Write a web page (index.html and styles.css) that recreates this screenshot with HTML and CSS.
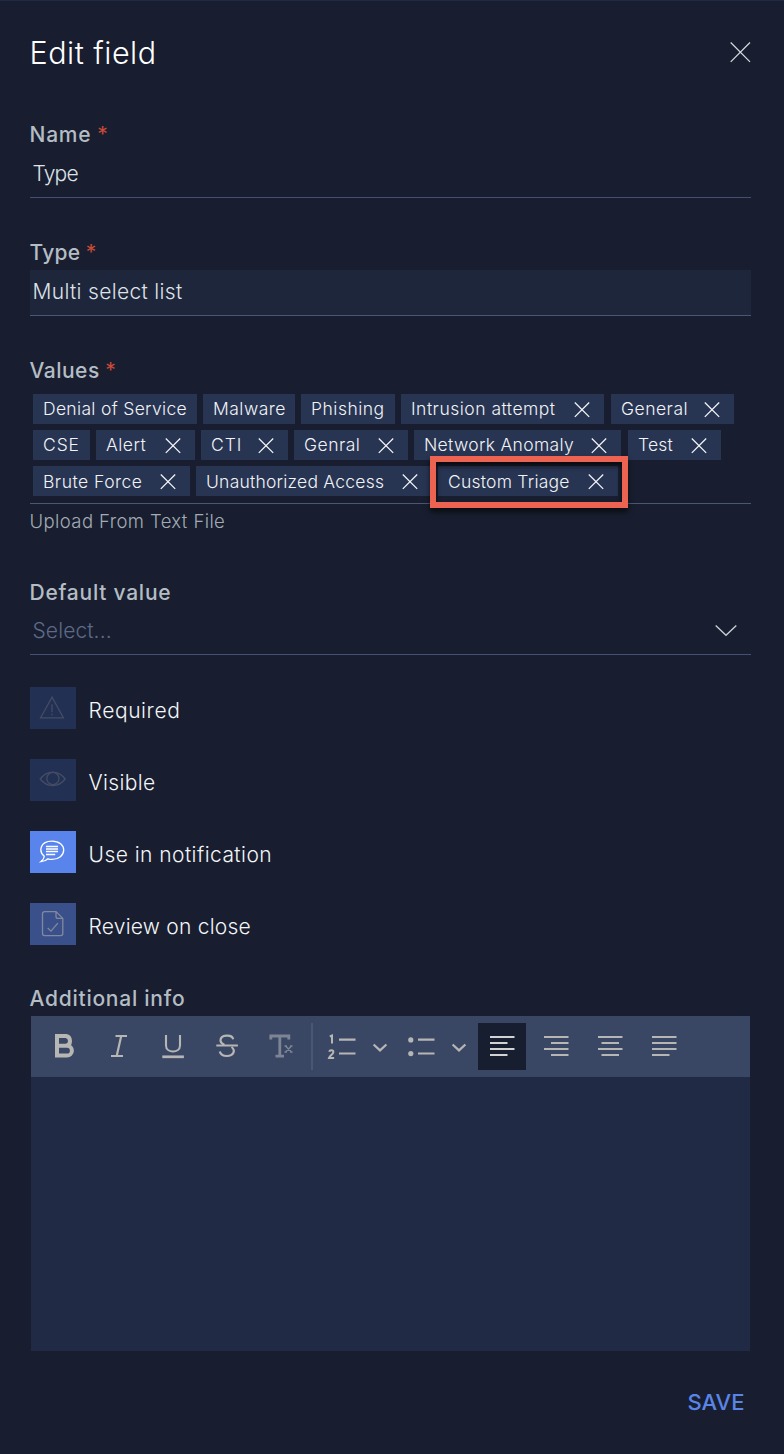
FILE: index.html
```
<!DOCTYPE html>
<html lang="en">
<head>
<meta charset="utf-8">
<title>Edit field</title>
<link rel="stylesheet" href="styles.css">
</head>
<body>
<svg class="defs" width="0" height="0">
  <symbol id="x" viewBox="0 0 16 16"><path d="M.8.5 15.200 14.900M15.200.5.8 14.900" fill="none" stroke="currentColor" stroke-width="1.3"/></symbol>
  <symbol id="chev" viewBox="0 0 16 10"><path d="M1.600 1.500l6.400 5.900L14.400 1.500" fill="none" stroke="currentColor" stroke-width="2.2"/></symbol>
</svg>
<main class="dialog">
  <header class="head">
    <h1 class="title">Edit field</h1>
    <button class="close" aria-label="Close"><svg width="22" height="22" viewBox="0 0 22 22"><path d="M1.700 1.500 21 20.900M21 1.500 1.700 20.900" fill="none" stroke="currentColor" stroke-width="1.25"/></svg></button>
  </header>

  <section class="group">
    <label class="label">Name <span class="req">*</span></label>
    <div class="input input-name">Type</div>
  </section>

  <section class="group">
    <label class="label label-type">Type <span class="req">*</span></label>
    <div class="input input-locked">Multi select list</div>
  </section>

  <section class="group group-values">
    <label class="label label-values">Values <span class="req">*</span></label>
    <div class="tags">
      <div class="row">
        <span class="tag w164 tight">Denial of Service</span>
        <span class="tag w92">Malware</span>
        <span class="tag w94">Phishing</span>
        <span class="tag w203">Intrusion attempt<svg class="x"><use href="#x"/></svg></span>
        <span class="tag w123 push">General<svg class="x"><use href="#x"/></svg></span>
      </div>
      <div class="row">
        <span class="tag w57 loose">CSE</span>
        <span class="tag w99">Alert<svg class="x"><use href="#x"/></svg></span>
        <span class="tag w87 loose">CTI<svg class="x"><use href="#x"/></svg></span>
        <span class="tag w114">Genral<svg class="x"><use href="#x"/></svg></span>
        <span class="tag w207 tight">Network Anomaly<svg class="x"><use href="#x"/></svg></span>
        <span class="tag w93 push tighter">Test<svg class="x"><use href="#x"/></svg></span>
      </div>
      <div class="row row-low">
        <span class="tag w157">Brute Force<svg class="x"><use href="#x"/></svg></span>
        <span class="tag w236 tighter">Unauthorized Access<svg class="x"><use href="#x"/></svg></span>
        <span class="tag w180 tighter marked">Custom Triage<svg class="x"><use href="#x"/></svg></span>
      </div>
    </div>
    <div class="upload">Upload From Text File</div>
  </section>

  <section class="group group-default">
    <label class="label">Default value</label>
    <div class="input input-select">Select...<svg width="22" height="14" viewBox="0 0 22 14"><path d="M.7 1.5 11 11.2 21.3 1.5" fill="none" stroke="currentColor" stroke-width="1.4"/></svg></div>
  </section>

  <section class="options">
    <div class="option">
      <span class="toggle dim"><svg width="28" height="28" viewBox="0 0 28 28"><path d="M13 4.2 1.6 24.8h22.8zM13 11.2v8M13 20.8v1.8"/></svg></span>
      <span class="s-req">Required</span>
    </div>
    <div class="option">
      <span class="toggle dim"><svg width="28" height="28" viewBox="0 0 28 28"><path d="M1.200 14C8 4.800 19.500 4.800 26.200 14 19.500 22.700 8 22.700 1.200 14z"/><circle cx="13.900" cy="13.500" r="6.100"/></svg></span>
      <span>Visible</span>
    </div>
    <div class="option">
      <span class="toggle on"><svg width="28" height="28" viewBox="0 0 28 28"><path d="M5.300 19.300C-.6 14.500.8 4.200 13 4.100c7.300 0 11.700 4.200 11.700 9 0 5.300-5 9.300-11.700 9.300-1.700 0-2.800-.2-4-.6-1.500 1.500-4 2.700-7.200 2.900 1.700-1.200 3.300-3.200 3.500-5.400z"/><path class="thin" d="M7 9.500h12M7 12h12M7 14.500h12M7 17.500h9.200"/></svg></span>
      <span class="s-use">Use in notification</span>
    </div>
    <div class="option">
      <span class="toggle mid"><svg width="28" height="28" viewBox="0 0 28 28"><path d="M17 2.600H5.500A2 2 0 0 0 3.500 4.600v20a2 2 0 0 0 2 2h16.300a2 2 0 0 0 2-2V9.400zM17 2.600v4.800a2 2 0 0 0 2 2h4.800M8.700 19l3.300 3.100 6.800-8"/></svg></span>
      <span class="s-rev">Review on close</span>
    </div>
  </section>

  <section class="info">
    <label class="label label-info">Additional info</label>
    <div class="editor">
      <div class="toolbar">
        <button class="tool" aria-label="Bold"><svg width="36" height="36" viewBox="0 0 18 18"><path d="M5 4h4.500a2.500 2.500 0 0 1 0 4.900H5zM5 8.900h5a2.450 2.450 0 0 1 0 4.900H5z" stroke-width="2"/></svg></button>
        <button class="tool" aria-label="Italic"><svg width="36" height="36" viewBox="0 0 36 36"><path d="M14.500 8H26M10 28H22M20.200 8l-4.500 20" stroke-width="2.200"/></svg></button>
        <button class="tool" aria-label="Underline"><svg width="36" height="36" viewBox="0 0 36 36"><path d="M11 7v10.500c0 8 14 8 14 0V7" stroke-width="2.100"/><path d="M7.300 28.800h21.600" stroke-width="2.700"/></svg></button>
        <button class="tool" aria-label="Strike"><svg width="36" height="36" viewBox="0 0 36 36"><path d="M24.200 11.200C23 6 11.500 6.500 11.500 12.500c0 2.300 1.800 3.500 4 4.500M22.500 19c4.500 3.500 2 9-4.500 9-3.500 0-6.500-1.500-7.200-4.500" stroke-width="2.200"/><path d="M7.300 17.500h21.600" stroke-width="2"/></svg></button>
        <button class="tool faded" aria-label="Clear formatting"><svg width="36" height="36" viewBox="0 0 36 36"><path d="M7.800 11.500V8h18v3.500M16.800 8v19.500M12.500 28.200h8.500" stroke-width="2.800"/><path d="M22.500 18l6 6M28.500 18l-6 6M21.500 18h2.500M27 18h2.500M21.500 24h2.500M27 24h2.500" stroke-width="1.500"/></svg></button>
        <span class="divider"></span>
        <button class="tool list" aria-label="Ordered list"><svg width="36" height="36" viewBox="0 0 36 36"><path d="M14 11.700h16.500M14 25.500h16.500" stroke-width="2.200"/><path d="M4.800 8.500 7 7.600V15.500M4.200 23.800c.5-2.300 4.200-2 4.200.2 0 2.200-3.400 3.500-4.300 5.900h5" stroke-width="2"/></svg></button>
        <svg class="chev"><use href="#chev"/></svg>
        <button class="tool list bullets" aria-label="Bullet list"><svg width="36" height="36" viewBox="0 0 36 36"><path d="M14 11.700h16.500M14 25.500h16.500" stroke-width="2.200"/><circle class="dot" cx="6.800" cy="11.900" r="2.600"/><circle class="dot" cx="6.800" cy="25.600" r="2.600"/></svg></button>
        <svg class="chev"><use href="#chev"/></svg>
        <button class="tool active" aria-label="Align left"><svg width="36" height="36" viewBox="0 0 36 36"><path d="M6 9h24.500M6 15h17.500M6 21h24.500M6 27h17.500"/></svg></button>
        <button class="tool" aria-label="Align right"><svg width="36" height="36" viewBox="0 0 36 36"><path d="M6 9h24.500M13 15h17.500M6 21h24.500M13 27h17.500"/></svg></button>
        <button class="tool" aria-label="Align center"><svg width="36" height="36" viewBox="0 0 36 36"><path d="M6 9h24.500M9.500 15h17.500M6 21h24.500M9.500 27h17.500"/></svg></button>
        <button class="tool" aria-label="Justify"><svg width="36" height="36" viewBox="0 0 36 36"><path d="M6 9h24.500M6 15h24.500M6 21h24.500M6 27h17.500"/></svg></button>
      </div>
      <div class="content"></div>
    </div>
  </section>

  <footer class="foot"><button class="save">SAVE</button></footer>
</main>
</body>
</html>
```
FILE: styles.css
```
* { box-sizing: border-box; }
html { background: #181e2f; }
body {
  margin: 0;
  background: #181e2f;
  color: #eceef2;
  font: 300 21px/30px Inter, "Liberation Sans", sans-serif;
}
button { margin: 0; padding: 0; border: 0; background: none; font: inherit; color: inherit; }
svg { display: block; flex: none; }
.defs { position: absolute; }

.dialog { height: 1454px; padding: 0 33px 0 30px; border-top: 1px solid #1f2a44; }
.head { display: flex; justify-content: space-between; height: 116px; padding-top: 32px; }
.title { margin: 0; font-size: 30.500px; line-height: 40px; font-weight: 300; letter-spacing: .5px; color: #fff; margin-left: -.5px; }
.close { height: 22px; margin-top: 8px; color: #d3d8de; }

.group { height: 118px; }
.label { display: block; height: 35px; padding-top: 3px; margin-left: -.5px; font-weight: 500; color: #b4bcc4; letter-spacing: .75px; }
.label-type { letter-spacing: .25px; }
.label-values { letter-spacing: .5px; }
.req { color: #c94a38; font-weight: 400; margin-left: -.5px; }
.input { display: flex; height: 46px; padding: 7px 3px 0 2.500px; border-bottom: 1px solid #454f75; color: #dfe2e8; letter-spacing: .32px; }
.input-name { letter-spacing: -.8px; }
.input-locked { background: #1e263b; border-color: #4a5676; }
.input-select { height: 45px; padding-top: 6px; justify-content: space-between; border-color: #435274; color: #5d6a88; letter-spacing: .1px; }
.input-select svg { margin: 8px 11px 0 0; color: #c8ccd4; }

.group-values { height: 222px; }
.tags { display: flex; flex-direction: column; gap: 6px; height: 116px; padding: 6px 3px 0; border-bottom: 1px solid #4a5672; }
.row { display: flex; gap: 6px; height: 30px; }
.tag {
  display: flex; flex: none; align-items: center; justify-content: space-between;
  height: 30px; padding: 0 14px 1px 10px; background: #273452;
  font-size: 17.500px; letter-spacing: .5px; color: #f1f3f6; white-space: nowrap;
}
.tag .x { width: 16px; height: 16px; margin-top: 2px; }
.row-low .tag { padding-top: 1px; padding-bottom: 0; }
.row-low .tag .x { margin-top: 1px; }
.push { margin-left: 1px; }
.loose { letter-spacing: .9px; }
.tight { letter-spacing: .32px; }
.tighter { letter-spacing: .23px; }
.w57 { width: 57px; } .w87 { width: 87px; } .w92 { width: 92px; } .w93 { width: 93px; }
.w94 { width: 94px; } .w99 { width: 99px; } .w114 { width: 114px; } .w123 { width: 123px; }
.w157 { width: 157px; } .w164 { width: 164px; } .w180 { width: 180px; }
.w203 { width: 203px; } .w207 { width: 207px; } .w236 { width: 236px; }
.w57, .w92, .w94, .w164 { padding-right: 0; }

/* Highlight frame around the newly added value */
.marked { position: relative; }
.marked::after {
  content: ""; position: absolute; inset: -10px -10px -12px -8px;
  border: 6px solid #ec6451;
  box-shadow: 0 4px 5px rgba(0, 0, 0, .6), inset 0 4px 5px rgba(0, 0, 0, .65);
}

.upload { height: 36px; padding-top: 2px; margin-left: -.5px; font-size: 18.500px; color: #a3abb5; letter-spacing: .4px; }
.group-default { height: 112px; }

.options { display: grid; gap: 30px; }
.option { display: flex; gap: 12.500px; height: 42px; line-height: 48px; color: #f4f5f8; letter-spacing: .35px; }
.toggle { display: flex; width: 46px; height: 42px; padding: 6px 8px 0 9px; }
.toggle svg { fill: none; stroke: currentColor; stroke-width: 1.3; }
.toggle .thin { stroke-width: 1.4; }
.dim { background: #223054; color: #454c63; }
.on { background: #5884ec; color: #fff; }
.mid { background: #39508b; color: #83899c; }
.s-req { letter-spacing: .6px; }
.s-use { letter-spacing: .45px; }
.s-rev { letter-spacing: .23px; }

.info { margin-top: 38px; }
.label-info { height: 33px; padding-top: 1px; }
.editor { width: 719px; height: 335px; margin-left: 1px; background: #202a44; }
.toolbar { display: flex; height: 61px; padding: 7px 0 7px 10px; background: #3a4764; color: #b6b6b4; }
.tool { display: flex; align-items: center; justify-content: center; width: 48px; height: 47px; padding-bottom: 1px; margin-right: 6px; }
.tool svg { fill: none; stroke: currentColor; stroke-width: 2; }
.tool .dot { fill: currentColor; stroke: none; }
.faded { color: #7d8494; }
.divider { width: 2px; height: 47px; background: #4a5774; }
.list { width: 36px; margin: 0 0 0 12px; }
.bullets { margin-left: 16px; }
.chev { width: 16px; height: 10px; margin: 20px 0 0 11px; }
.active { margin-left: 11px; background: #171e2f; color: #d0d2d3; }
.foot { display: flex; justify-content: flex-end; padding: 36px 6.500px 0 0; }
.save { font-size: 22px; font-weight: 500; color: #5a85e8; }
```
